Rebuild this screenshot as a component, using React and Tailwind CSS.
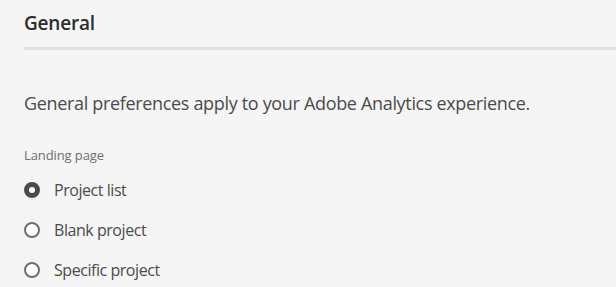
import React from 'react'

const options = [
    { label: 'Project list', checked: true },
    { label: 'Blank project', checked: false },
    { label: 'Specific project', checked: false },
]

const Radio = ({ checked }) => (
    <span
        className={
            checked
                ? 'w-[16px] h-[16px] rounded-full border-[5px] border-[#4b4b4b] bg-white shrink-0'
                : 'w-[16px] h-[16px] rounded-full border-2 border-[#6e6e6e] bg-white shrink-0'
        }
    />
)

export default function App() {
    return (
        <div
            className="w-[616px] h-[287px] bg-[#f5f5f5] overflow-hidden pl-6 text-[#323232]"
            style={{ fontFamily: '"Open Sans", "Noto Sans", sans-serif' }}
        >
            {/* header */}
            <div className="pt-[10px] h-[47px]">
                <h1 className="text-[19px] leading-[26px] font-semibold text-[#2c2c2c] tracking-[-0.2px]">
                    General
                </h1>
            </div>
            <div className="h-[3px] bg-[#e1e1e1]" />

            <p className="mt-[41px] text-[18px] leading-[24px] text-[#4b4b4b] tracking-[-0.33px]">
                General preferences apply to your Adobe Analytics experience.
            </p>

            <div className="mt-[31px] text-[13px] leading-[18px] text-[#6e6e6e] tracking-[-0.1px]">
                Landing page
            </div>

            <div className="mt-[6px] flex flex-col">
                {options.map((opt) => (
                    <label
                        key={opt.label}
                        className="h-[40px] flex items-center gap-[14px] text-[16px] text-[#4b4b4b] tracking-[-0.45px]"
                    >
                        <Radio checked={opt.checked} />
                        <span>{opt.label}</span>
                    </label>
                ))}
            </div>
        </div>
    )
}
